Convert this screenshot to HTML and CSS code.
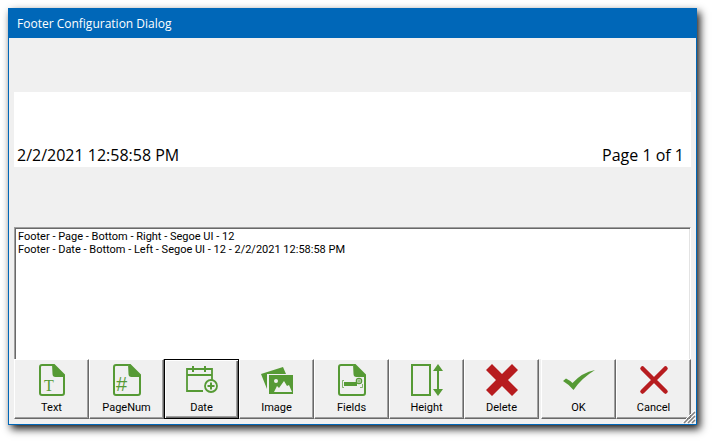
FILE: index.html
```
<!DOCTYPE html>
<html lang="en">
<head>
    <meta charset="UTF-8">
    <meta name="viewport" content="width=device-width, initial-scale=1.0">
    <title>Footer Configuration Dialog</title>
    <link rel="stylesheet" href="styles.css">
</head>
<body>
    <div class="dialog" role="dialog" aria-labelledby="dialogTitle">
        <h1 id="dialogTitle" class="title-bar">Footer Configuration Dialog</h1>

        <div class="content">
            <div class="preview">
                <span>2/2/2021 12:58:58 PM</span>
                <span>Page 1 of 1</span>
            </div>

            <select class="item-list" size="10" aria-label="Footer items">
                <option>Footer - Page - Bottom - Right - Segoe UI - 12</option>
                <option>Footer - Date - Bottom - Left - Segoe UI - 12 - 2/2/2021 12:58:58 PM</option>
            </select>

            <div class="toolbar">
                <div class="edit-buttons">
                    <button type="button">
                        <svg class="icon" viewBox="0 0 32 32" aria-hidden="true">
                            <path d="M17 1H6A2 2 0 0 0 4 3V29A2 2 0 0 0 6 31H26A2 2 0 0 0 28 29V12" fill="none" stroke="currentColor" stroke-width="2"/>
                            <path d="M16 0H18.500L29 10.500V13H19.500A3 3 0 0 1 16.500 10Z" fill="currentColor"/>
                            <text class="icon-serif" x="8" y="27">T</text>
                        </svg>
                        Text
                    </button>
                    <button type="button">
                        <svg class="icon" viewBox="0 0 32 32" aria-hidden="true">
                            <path d="M17 1H5A2 2 0 0 0 3 3V29A2 2 0 0 0 5 31H27A2 2 0 0 0 29 29V12" fill="none" stroke="currentColor" stroke-width="2"/>
                            <path d="M17 0H19.500L30 10.500V13H20.500A3 3 0 0 1 17.500 10Z" fill="currentColor"/>
                            <text class="icon-sans" x="5" y="27">#</text>
                        </svg>
                        PageNum
                    </button>
                    <button type="button" class="default">
                        <svg class="icon" viewBox="0 0 32 32" aria-hidden="true">
                            <g fill="none" stroke="currentColor" stroke-width="1.800">
                                <path d="M17 27H1V5H26V16M1 11H26"/>
                                <path d="M7 2V8M19 2V8" stroke-width="2"/>
                                <circle cx="25" cy="22" r="6"/>
                                <path d="M25 18.500V25.500M21.500 22H28.500" stroke-width="2"/>
                            </g>
                        </svg>
                        Date
                    </button>
                    <button type="button">
                        <svg class="icon" viewBox="0 0 32 32" aria-hidden="true">
                            <path d="M0 10L22 3L25 10H6V25Z" fill="currentColor"/>
                            <path d="M8 11H32V30H8Z" fill="currentColor"/>
                            <circle cx="15" cy="17" r="2" fill="#f0f0f0"/>
                            <path d="M13 28L16 22L18 24L23 17L26 22L28 21L31 28Z" fill="#f0f0f0"/>
                        </svg>
                        Image
                    </button>
                    <button type="button">
                        <svg class="icon" viewBox="0 0 32 32" aria-hidden="true">
                            <path d="M17 1H5A2 2 0 0 0 3 3V29A2 2 0 0 0 5 31H27A2 2 0 0 0 29 29V12" fill="none" stroke="currentColor" stroke-width="2"/>
                            <path d="M17 0H19.500L30 10.500V13H20.500A3 3 0 0 1 17.500 10Z" fill="currentColor"/>
                            <path d="M8 18H21V22H8Z" fill="currentColor"/>
                            <path d="M8 16.500H6.500V23.500H8M24 23.500H26.500V20M23 15V19M21 17H25" fill="none" stroke="currentColor" stroke-opacity=".7"/>
                            <circle cx="23" cy="17" r="2.700" fill="none" stroke="currentColor" stroke-width="1.200"/>
                        </svg>
                        Fields
                    </button>
                    <button type="button">
                        <svg class="icon" viewBox="0 0 32 32" aria-hidden="true">
                            <path d="M1 1H19V31H1Z" fill="none" stroke="currentColor" stroke-width="2"/>
                            <path d="M27 5V27" stroke="currentColor" stroke-width="2"/>
                            <path d="M27 0L32 7H22ZM27 32L32 25H22Z" fill="currentColor"/>
                        </svg>
                        Height
                    </button>
                    <button type="button">
                        <svg class="icon red" viewBox="0 0 32 32" aria-hidden="true">
                            <path d="M6 0L16 10L26 0L32 6L22 16L32 26L26 32L16 22L6 32L0 26L10 16L0 6Z" fill="currentColor"/>
                        </svg>
                        Delete
                    </button>
                </div>
                <div class="close-buttons">
                    <button type="button">
                        <svg class="icon" viewBox="0 0 32 32" aria-hidden="true">
                            <path d="M0 17L3 14.500Q7 16.500 9.500 19Q19 8.500 32 6Q18 14.500 10.500 26Q6 20.500 0 17Z" fill="currentColor"/>
                        </svg>
                        OK
                    </button>
                    <button type="button">
                        <svg class="icon red" viewBox="0 0 32 32" aria-hidden="true">
                            <path d="M4.500 4.500L27.500 27.500M27.500 4.500L4.500 27.500" stroke="currentColor" stroke-width="4.500" stroke-linecap="round"/>
                        </svg>
                        Cancel
                    </button>
                </div>
            </div>
        </div>

        <svg class="grip" viewBox="0 0 14 14" aria-hidden="true">
            <path d="M2 13L13 2M6 13L13 6M10 13L13 10" stroke="#808080" stroke-width="1.500"/>
            <path d="M0 13L13 0M4 13L13 4M8 13L13 8" stroke="#ffffff"/>
        </svg>
    </div>
</body>
</html>
```
FILE: styles.css
```
body {
    margin: 0;
    padding: 8px 16px 16px 8px;
    background: #fff;
    font-family: Roboto, Arial, sans-serif;
    font-size: 11px;
    color: #000;
}
.dialog {
    position: relative;
    background: #f0f0f0;
    border: 1px solid #0067b8;
    box-shadow: 3px 4px 8px rgba(0, 0, 0, 0.9);
}
.title-bar {
    margin: 0;
    padding: 0 8px;
    background: #0067b8;
    color: #fff;
    font-family: "Open Sans", sans-serif;
    font-size: 12px;
    font-weight: normal;
    line-height: 29px;
}
.content {
    padding: 54px 5px 5px;
}
.preview {
    display: flex;
    justify-content: space-between;
    align-items: flex-end;
    height: 75px;
    padding: 0 7px 0 3px;
    box-sizing: border-box;
    background: #fff;
    font-family: "Open Sans", sans-serif;
    font-size: 16px;
    line-height: 24px;
}
.item-list {
    display: block;
    width: 100%;
    height: 132px;
    margin-top: 60px;
    padding: 2px 1px 0;
    box-sizing: border-box;
    border: 1px solid #a0a0a0;
    border-right-color: #fff;
    border-bottom: none;
    border-radius: 0;
    box-shadow: inset 1px 1px #696969, inset -1px 0 #e3e3e3;
    background: #fff;
    color: #000;
    font-family: inherit;
    font-size: 11px;
    outline: none;
    overflow: hidden;
}
.item-list option {
    min-height: 13px;
    padding: 0 2px;
    line-height: 13px;
}
.toolbar {
    display: flex;
    gap: 2px;
}
.edit-buttons,
.close-buttons {
    display: flex;
    flex: 7;
}
.close-buttons {
    flex: 2;
}
button {
    display: flex;
    flex: 1;
    flex-direction: column;
    align-items: center;
    gap: 4px;
    height: 60px;
    padding: 4px 0 0;
    border: 1px solid #fff;
    border-right-color: #696969;
    border-bottom-color: #696969;
    box-shadow: inset -1px -1px #a0a0a0;
    background: #f0f0f0;
    color: #000;
    font-family: inherit;
    font-size: 11px;
    line-height: 16px;
}
button:active {
    border-color: #696969 #fff #fff #696969;
    box-shadow: none;
}
button.default {
    border-color: #000;
    box-shadow: inset 1px 1px #fff, inset -1px -1px #696969, inset -2px -2px #a0a0a0;
}
.icon {
    width: 32px;
    height: 32px;
    color: #569a35;
}
.icon.red {
    color: #b71c1f;
}
.icon-serif {
    fill: currentColor;
    font-family: "Liberation Serif", serif;
    font-size: 16px;
}
.icon-sans {
    fill: currentColor;
    font-family: "Liberation Sans", sans-serif;
    font-size: 20px;
}
.grip {
    position: absolute;
    right: 0;
    bottom: 0;
    width: 14px;
    height: 14px;
}
```
